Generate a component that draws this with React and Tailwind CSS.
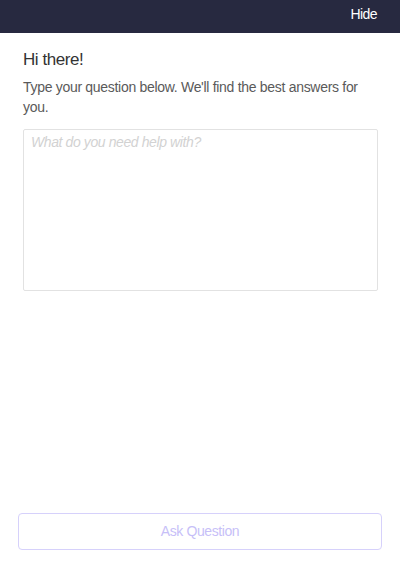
import React from 'react';

// Help widget: ask-a-question panel
const App = () => {
    return (
        <div
            className="flex flex-col h-[575px] w-full bg-white tracking-[-0.4px]"
            style={{ fontFamily: '"Liberation Sans", Arial, sans-serif' }}
        >
            {/* Top bar */}
            <div className="flex justify-end items-start h-[33px] bg-[#272940] pr-[23px] pt-[4px]">
                <button className="text-[14px] leading-[20px] text-white tracking-[-0.6px]">Hide</button>
            </div>

            {/* Intro + question box */}
            <div className="px-[22px] pt-[15px] pl-[23px]">
                <h1 className="text-[17px] leading-[24px] text-[#333333] tracking-[-0.45px]">Hi there!</h1>
                <p className="mt-[5px] text-[14px] leading-[20px] text-[#5a5a5a] tracking-[-0.3px]">
                    Type your question below. We'll find the best answers for you.
                </p>
                <textarea
                    className="mt-[12px] block w-full h-[162px] resize-none border border-[#e2e2e2] rounded-[2px] px-[7px] pt-[2px] text-[14px] leading-[20px] text-[#333333] outline-none placeholder:italic placeholder:text-[#d2d2d2]"
                    placeholder="What do you need help with?"
                />
            </div>

            {/* Footer action */}
            <div className="mt-auto px-[18px] pb-[25px]">
                <button className="w-full h-[37px] border border-[#d6d1fb] rounded-[4px] text-[14px] text-[#c7bff8]">
                    Ask Question
                </button>
            </div>
        </div>
    );
};

export default App;
